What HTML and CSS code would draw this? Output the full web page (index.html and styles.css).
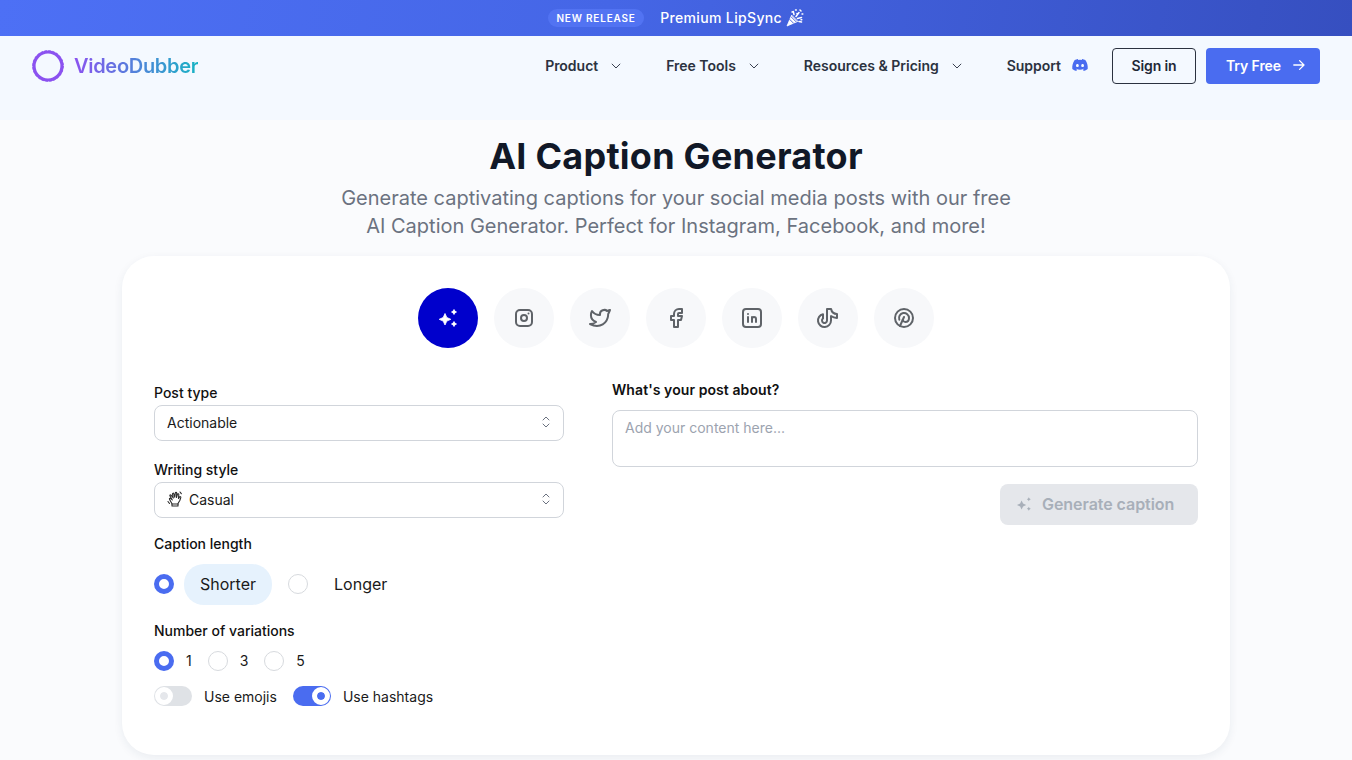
FILE: index.html

```html
<!DOCTYPE html>
<html lang="en">
<head>
    <meta charset="UTF-8">
    <title>AI Caption Generator - VideoDubber</title>
    <link rel="stylesheet" href="styles.css">
</head>
<body>
    <div class="banner">
        <span class="badge">NEW RELEASE</span>
        <span class="banner-text">Premium LipSync</span>
        <svg class="party" width="18" height="18" viewBox="0 0 18 18" fill="#fff" stroke="#fff" stroke-linecap="round" stroke-linejoin="round">
            <path d="M5.500 6.500 1 17l10.500-4.500z" stroke-width=".8"/>
            <path d="M3.800 10.500l3.700 3.700M5.300 8l4.700 4.700" stroke="#3f5ad6" stroke-width=".9"/>
            <path d="M8 5.500 7.300 2.500M10 7.500 13 3.500M11.500 9.500l4-1M9.500 1h.8M14 1l1 1M16 5h.8M13 12.500l2.500.6M11 4.500l.8.8M6 3h.6M15 10.700h.8" fill="none" stroke-width="1.500"/>
        </svg>
    </div>

    <header class="header">
        <a class="logo">
            <svg width="32" height="32" viewBox="0 0 32 32" fill="none"><circle cx="16" cy="16" r="14" stroke="#8b52f0" stroke-width="3.200"/><circle cx="16" cy="16" r="15.300" stroke="#8b52f0" stroke-width="1" stroke-dasharray="2.500 1.500"/></svg>
            <span class="logo-text">VideoDubber</span>
        </a>
        <nav class="nav">
            <a class="nav-item">Product <svg class="chev" width="10" height="6" viewBox="0 0 10 6" fill="none" stroke="#3a4150" stroke-width="1"><path d="M.8.8 5 5l4.200-4.200"/></svg></a>
            <a class="nav-item">Free Tools <svg class="chev" width="10" height="6" viewBox="0 0 10 6" fill="none" stroke="#3a4150" stroke-width="1"><path d="M.8.8 5 5l4.200-4.200"/></svg></a>
            <a class="nav-item">Resources &amp; Pricing <svg class="chev" width="10" height="6" viewBox="0 0 10 6" fill="none" stroke="#3a4150" stroke-width="1"><path d="M.8.8 5 5l4.200-4.200"/></svg></a>
            <a class="nav-item support">Support
                <svg width="16" height="16" viewBox="0 0 16 16" fill="#4a6cf0"><path d="M13.300 3.100A13 13 0 0 0 10.100 2.100l-.4.800a12 12 0 0 0-3.400 0l-.4-.8a13 13 0 0 0-3.200 1C.6 6.100.1 9 .3 11.900a13 13 0 0 0 4 2l.8-1.300-1.300-.6.300-.2a9.300 9.300 0 0 0 7.800 0l.3.200-1.300.6.800 1.300a13 13 0 0 0 4-2c.3-3.300-.5-6.200-2.400-8.800zM5.400 10.100c-.8 0-1.400-.7-1.400-1.600s.6-1.600 1.400-1.600 1.400.7 1.400 1.600-.6 1.600-1.400 1.600zm5.200 0c-.8 0-1.400-.7-1.400-1.600s.6-1.600 1.400-1.600 1.400.7 1.400 1.600-.6 1.600-1.400 1.600z"/></svg>
            </a>
        </nav>
        <button class="btn-outline">Sign in</button>
        <button class="btn-primary">Try Free
            <svg width="12" height="12" viewBox="0 0 12 12" fill="none" stroke="#fff" stroke-width="1.300" stroke-linecap="round" stroke-linejoin="round"><path d="M.8 6h10.200M6.600 1.600 11 6l-4.400 4.400"/></svg>
        </button>
    </header>

    <main class="main">
        <h1>AI Caption Generator</h1>
        <p class="subtitle">Generate captivating captions for your social media posts with our free<br>AI Caption Generator. Perfect for Instagram, Facebook, and more!</p>

        <section class="card">
            <div class="platforms">
                <div class="platform active">
                    <svg width="20" height="20" viewBox="0 0 20 20" fill="#fff" stroke="#fff" stroke-width=".8" stroke-linejoin="round"><path d="M7 5.500 8.800 9.500l4 1.800-4 1.800L7 17l-1.800-3.900-4-1.800 4-1.800z"/><path d="M16 1.500l.9 1.600 1.600.9-1.600.9-.9 1.600-.9-1.600-1.600-.9 1.600-.9zM16 13.500l.9 1.600 1.600.9-1.600.9-.9 1.600-.9-1.600-1.600-.9 1.600-.9z"/></svg>
                </div>
                <div class="platform">
                    <svg width="24" height="24" viewBox="0 0 24 24" fill="none" stroke="#5f6368" stroke-width="2" stroke-linecap="round" stroke-linejoin="round"><rect x="4" y="4" width="16" height="16" rx="4"/><circle cx="12" cy="12" r="3"/><path d="M16.500 7.500v.01"/></svg>
                </div>
                <div class="platform">
                    <svg width="24" height="24" viewBox="0 0 24 24" fill="none" stroke="#5f6368" stroke-width="2" stroke-linecap="round" stroke-linejoin="round"><path d="M22 4.010c-1 .49-1.980.689-3 .99-1.121-1.265-2.783-1.335-4.380-.737S11.977 6.323 12 8v1c-3.245.083-6.135-1.395-8-4 0 0-4.182 7.433 4 11-1.872 1.247-3.739 2.088-6 2 3.308 1.803 6.913 2.423 10.034 1.517 3.580-1.040 6.522-3.723 7.651-7.742a13.840 13.840 0 0 0 .497-3.753c0-.249 1.510-2.772 1.818-4.013z"/></svg>
                </div>
                <div class="platform">
                    <svg width="24" height="24" viewBox="0 0 24 24" fill="none" stroke="#5f6368" stroke-width="2" stroke-linecap="round" stroke-linejoin="round"><path d="M7 10v4h3v7h4v-7h3l1-4h-4V8a1 1 0 0 1 1-1h3V3h-3a5 5 0 0 0-5 5v2H7"/></svg>
                </div>
                <div class="platform">
                    <svg width="24" height="24" viewBox="0 0 24 24" fill="none" stroke="#5f6368" stroke-width="2" stroke-linecap="round" stroke-linejoin="round"><rect x="3" y="3" width="18" height="18" rx="3"/><path d="M8 11v5M8 8v.01M12 16v-5M16 16v-3a2 2 0 0 0-4 0"/></svg>
                </div>
                <div class="platform">
                    <svg width="24" height="24" viewBox="0 0 24 24" fill="none" stroke="#5f6368" stroke-width="2" stroke-linecap="round" stroke-linejoin="round"><path d="M21 7.917v4.034A9.948 9.948 0 0 1 15 10v4.500a6.500 6.500 0 1 1-8-6.326V12.500a2.500 2.500 0 1 0 4 2V3h4.083A6.005 6.005 0 0 0 21 7.917z"/></svg>
                </div>
                <div class="platform">
                    <svg width="24" height="24" viewBox="0 0 24 24" fill="none" stroke="#5f6368" stroke-width="2" stroke-linecap="round" stroke-linejoin="round"><path d="M8 20l4-9"/><path d="M10.700 14c.437 1.263 1.430 2 2.550 2 2.071 0 3.750-1.554 3.750-4a5 5 0 1 0-9.700 1.700"/><circle cx="12" cy="12" r="9"/></svg>
                </div>
            </div>

            <div class="columns">
                <div class="col-left">
                    <label class="field-label">Post type</label>
                    <div class="select">
                        <span>Actionable</span>
                        <svg width="10" height="14" viewBox="0 0 10 14" fill="none" stroke="#6b7280" stroke-width="1" stroke-linecap="round" stroke-linejoin="round"><path d="M2 5l3-3 3 3M2 9l3 3 3-3"/></svg>
                    </div>

                    <label class="field-label style-label">Writing style</label>
                    <div class="select">
                        <span class="with-icon">
                            <svg width="16" height="16" viewBox="0 0 16 16" fill="#fff" stroke="#2b2b2b" stroke-width="1.100" stroke-linecap="round" stroke-linejoin="round"><path d="M5 15h6v-2.500l1.800-3 1-3c.2-.8-.8-1.200-1.200-.5L11.500 7.500 11.800 3.500c0-.9-1.200-1-1.400-.1L9.500 6.500 9.700 2c0-.9-1.300-.9-1.400 0L7.800 6.300 6.800 2.700c-.2-.9-1.400-.6-1.300.3l.8 4-2.300-2.800c-.6-.7-1.500 0-1 .7l2.300 4-1.800-1.500c-.7-.5-1.400.3-.9 1L5 12.700z"/><path d="M1 10.500l1.500 2M13 1l1.300 1.700M5 13h6" fill="none"/></svg>
                            Casual
                        </span>
                        <svg width="10" height="14" viewBox="0 0 10 14" fill="none" stroke="#6b7280" stroke-width="1" stroke-linecap="round" stroke-linejoin="round"><path d="M2 5l3-3 3 3M2 9l3 3 3-3"/></svg>
                    </div>

                    <label class="field-label length-label">Caption length</label>
                    <div class="length-row">
                        <span class="radio checked"></span>
                        <span class="pill selected">Shorter</span>
                        <span class="radio"></span>
                        <span class="pill longer">Longer</span>
                    </div>

                    <label class="field-label variations-label">Number of variations</label>
                    <div class="variations-row">
                        <span class="radio checked"></span><span class="num">1</span>
                        <span class="radio"></span><span class="num">3</span>
                        <span class="radio"></span><span class="num">5</span>
                    </div>

                    <div class="toggles">
                        <span class="toggle"><span class="knob"></span></span>
                        <span class="toggle-text">Use emojis</span>
                        <span class="toggle on"><span class="knob"></span></span>
                        <span class="toggle-text">Use hashtags</span>
                    </div>
                </div>

                <div class="col-right">
                    <label class="about-label">What's your post about?</label>
                    <textarea class="content-input" placeholder="Add your content here..."></textarea>
                    <button class="btn-generate" disabled>
                        <svg width="16" height="16" viewBox="0 0 20 20" fill="#a8afb9"><path d="M7 5.500 8.800 9.500l4 1.800-4 1.800L7 17l-1.800-3.900-4-1.800 4-1.800z"/><path d="M16 1.500l.9 1.600 1.600.9-1.600.9-.9 1.600-.9-1.600-1.600-.9 1.600-.9zM16 13.500l.9 1.600 1.600.9-1.600.9-.9 1.600-.9-1.600-1.600-.9 1.600-.9z"/></svg>
                        Generate caption
                    </button>
                </div>
            </div>
        </section>
    </main>
</body>
</html>
```

FILE: styles.css

```css
* { box-sizing: border-box; }
html, body { height: 760px; overflow: hidden; }
body { margin: 0; font-family: Inter, "Noto Sans", sans-serif; background-color: #fafbfd; color: #111; }

.banner { height: 36px; display: flex; align-items: center; justify-content: center; color: #fff; background: linear-gradient(100deg, #4d70f5 0%, #4566e6 45%, #364fc0 100%); }
.badge { font-size: 10px; font-weight: 600; letter-spacing: 0.8px; line-height: 18px; padding: 0 8.5px; background-color: #5273f2; border-radius: 9px; margin-right: 16px; }
.banner-text { font-size: 14px; font-weight: 500; letter-spacing: 0.35px; padding-bottom: 2px; }
.party { margin-left: 4px; }

.header { height: 84px; padding: 12px 32px 0; display: flex; align-items: flex-start; background-color: #f4f9ff; }
.logo { display: flex; align-items: center; height: 36px; gap: 10px; }
.logo-text { font-size: 20px; font-weight: 600; letter-spacing: -0.3px; background: linear-gradient(90deg, #8b52f0, #18b3c4); -webkit-background-clip: text; background-clip: text; color: transparent; }
.nav { margin-left: auto; display: flex; align-items: center; height: 34px; gap: 45px; margin-right: 24px; }
.nav-item { display: flex; align-items: center; gap: 13px; font-size: 14px; font-weight: 600; letter-spacing: -0.02px; color: #2b3240; }
.chev { margin-top: 1px; }
.support { gap: 11px; }
.btn-outline { width: 84px; height: 36px; padding-bottom: 2px; font: 600 14px Inter, sans-serif; letter-spacing: -0.1px; color: #1f2937; background: transparent; border: 1px solid #2b3240; border-radius: 4px; margin-right: 10px; }
.btn-primary { width: 114px; height: 36px; padding: 0 0 2px 20px; display: flex; align-items: center; gap: 12px; font: 600 14px Inter, sans-serif; letter-spacing: -0.1px; color: #fff; background-color: #4a6cf0; border: none; border-radius: 4px; }

.main { text-align: center; padding-top: 16px; }
h1 { margin: 0; font-size: 36px; line-height: 40px; font-weight: 700; color: #111827; letter-spacing: 0.25px; }
.subtitle { margin: 8px 0 16px; font-size: 20px; line-height: 28px; color: #6b7280; }

.card { width: 1108px; height: 499px; margin: 0 auto; padding: 32px; text-align: left; background-color: #fff; border-radius: 32px; box-shadow: 0 3px 10px rgba(30, 50, 90, 0.07); }
.platforms { display: flex; justify-content: center; gap: 16px; }
.platform { width: 60px; height: 60px; border-radius: 50%; background-color: #f7f8fa; display: flex; align-items: center; justify-content: center; }
.platform.active { background-color: #0000cc; }

.columns { display: flex; gap: 48px; margin-top: 35px; }
.col-left { width: 410px; }
.col-right { width: 586px; display: flex; flex-direction: column; }

.field-label { display: block; font-size: 14px; line-height: 20px; font-weight: 500; color: #111; }
.select { height: 36px; margin-top: 2px; padding: 0 12px 2px; display: flex; align-items: center; justify-content: space-between; font-size: 14px; color: #1a1a1a; background-color: #fff; border: 1px solid #d1d5db; border-radius: 8px; }
.with-icon { display: flex; align-items: center; gap: 6px; }
.style-label { margin-top: 19px; }
.length-label { margin-top: 16px; }
.length-row { display: flex; align-items: center; margin-top: 10px; }
.radio { width: 20px; height: 20px; border-radius: 50%; border: 1px solid #d7dade; background-color: #fff; flex-shrink: 0; }
.radio.checked { border: 5px solid #4a6cf0; }
.length-row .radio { margin-bottom: 1px; }
.pill { font-size: 16px; line-height: 41px; padding: 0 16px; border-radius: 20px; color: #1a1a1a; }
.pill.selected { margin: 0 16px 0 10px; background-color: #e6f2fd; }
.pill.longer { margin-left: 10px; }
.variations-label { margin-top: 16px; }
.variations-row { display: flex; align-items: center; margin-top: 10px; }
.num { font-size: 14px; color: #1a1a1a; margin-left: 12px; margin-right: 16px; padding-bottom: 1px; }
.toggles { display: flex; align-items: center; margin-top: 15px; }
.toggle { width: 38px; height: 20px; border-radius: 10px; background-color: #dfe2e6; display: flex; align-items: center; padding: 0 1px; margin-right: 12px; }
.knob { width: 18px; height: 18px; border-radius: 50%; background-color: #fff; border: 5px solid #fff; display: block; box-shadow: inset 0 0 0 4px #e5e7eb; }
.toggle.on { background-color: #4a6cf0; justify-content: flex-end; }
.toggle.on .knob { box-shadow: inset 0 0 0 4px #4a6cf0; }
.toggle-text { font-size: 14px; color: #1a1a1a; margin-right: 16px; }

.about-label { font-size: 14px; line-height: 20px; font-weight: 600; letter-spacing: 0.08px; color: #111; margin-top: -3px; }
.content-input { height: 57px; margin-top: 10px; padding: 7px 12px; font: 14px/20px Inter, sans-serif; border: 1px solid #d1d5db; border-radius: 8px; resize: none; outline: none; }
.content-input::placeholder { color: #9ca3af; }
.btn-generate { align-self: flex-end; width: 198px; height: 41px; margin-top: 17px; padding: 0 0 2px 16px; display: flex; align-items: center; gap: 10px; font: 600 16px Inter, sans-serif; letter-spacing: -0.05px; color: #a8afb9; background-color: #e5e7eb; border: none; border-radius: 8px; }
```
